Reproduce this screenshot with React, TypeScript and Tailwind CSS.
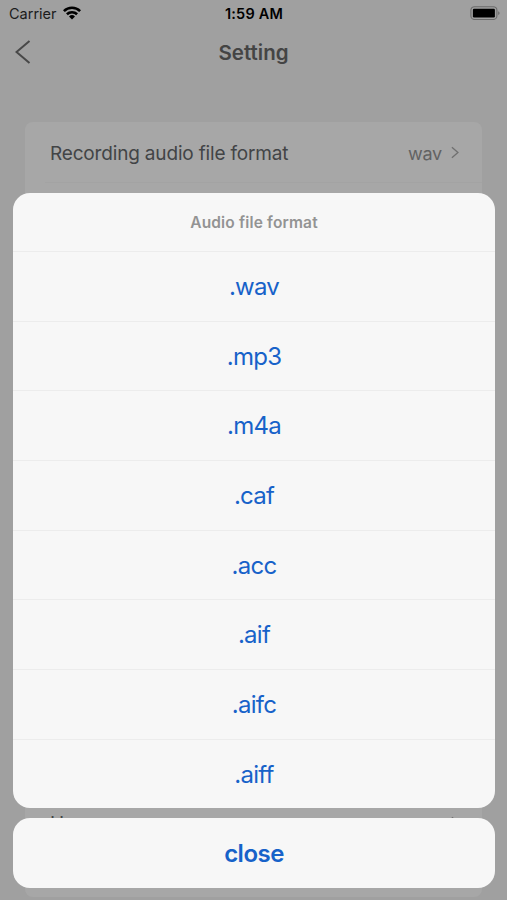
import { ReactNode } from "react"

const formats = ['.wav', '.mp3', '.m4a', '.caf', '.acc', '.aif', '.aifc', '.aiff']

const StatusBar = () => {
    return (
        <div className="grid grid-cols-3 items-center h-7 pl-[9px] pr-[7px] text-black">
            <div className="flex items-center gap-[6px]">
                <span className="text-[14.5px] leading-7 text-[#1c1c1c]">Carrier</span>
                <svg className="-mt-[2px]" width="18" height="14" viewBox="0 0 18 14" fill="none" stroke="currentColor" strokeWidth="2.6">
                    <path d="M0.9 5.1a11.6 11.6 0 0 1 16.2 0" />
                    <path d="M3.9 8.3a7.3 7.3 0 0 1 10.2 0" />
                    <path d="M9 13.6 6 10.5a4.3 4.3 0 0 1 6 0z" fill="currentColor" stroke="none" />
                </svg>
            </div>
            <p className="-ml-px text-center text-[14.5px] leading-7 font-semibold tracking-[0.2px]">1:59 AM</p>
            <svg className="-mt-[2px] justify-self-end" width="30" height="14" viewBox="0 0 30 14">
                <rect x="0.9" y="0.7" width="26" height="12.8" rx="3.6" fill="none" stroke="#6b6b6b" strokeWidth="1.1" />
                <rect x="2.9" y="2.7" width="22" height="8.8" rx="1.2" fill="#000" />
                <path d="M28.3 5.2c1.6.7 1.6 3.1 0 3.8z" fill="#606060" />
            </svg>
        </div>
    )
}

const SettingRow = ({ label, children }: { label: string, children?: ReactNode }) => {
    return (
        <div className="flex items-center justify-between h-[60px] pl-[25px] pr-[23px] pt-[3px]">
            <p className="text-[19px] leading-6 tracking-[-0.17px] text-[#424446]">{label}</p>
            <div className="flex items-center gap-[9px] text-[#626262]">
                {children}
                <svg className="-mt-[2px]" width="8" height="13" viewBox="0 0 9 14" fill="none" stroke="#707070" strokeWidth="1.5">
                    <path d="m1 1 6.8 6L1 13" />
                </svg>
            </div>
        </div>
    )
}

const App = () => {
    return (
        <div className="relative h-[900px] w-full overflow-hidden bg-[#a0a0a0] font-['Inter',sans-serif]">
            <div className="flex h-full flex-col">
                <StatusBar />

                <div className="grid grid-cols-[40px_1fr_40px] items-center h-[50px] px-[15px]">
                    <svg className="-mt-[2px]" width="16" height="24" viewBox="0 0 16 24" fill="none" stroke="#484848" strokeWidth="2">
                        <path d="M14.5 1 1.5 12l13 11" />
                    </svg>
                    <h1 className="text-center text-[20.5px] leading-7 font-semibold text-[#444]">Setting</h1>
                </div>

                <div className="mx-[25px] mt-[44px] flex h-[775px] flex-col justify-between rounded-lg bg-[#a7a7a7]">
                    <div>
                        <SettingRow label="Recording audio file format">
                            <span className="text-[18px] leading-6 tracking-[-0.2px]">wav</span>
                        </SettingRow>
                        <div className="ml-5 h-px bg-[#a3a3a3]" />
                    </div>
                    <div className="pb-[45px]">
                        <SettingRow label="Home" />
                    </div>
                </div>
            </div>

            {/* action sheet */}
            <div className="absolute right-3 bottom-3 left-[13px] flex flex-col gap-[9.6px] text-center text-[#1762c9]">
                <div className="overflow-hidden rounded-[17px] bg-[#f7f7f7]">
                    <p className="h-[58px] text-[15.5px] leading-[60px] font-semibold tracking-[0.16px] text-[#939393]">Audio file format</p>
                    {
                        formats.map(format => (
                            <button key={format} className="block h-[69.67px] w-full border-t border-[#ececec] text-[24px] leading-[70px] tracking-[-0.75px]">
                                {format}
                            </button>
                        ))
                    }
                </div>
                <button className="h-[70px] rounded-[17px] bg-[#f7f7f7] text-[24px] leading-[71px] font-semibold tracking-[-0.5px]">close</button>
            </div>
        </div>
    )
}

export default App
